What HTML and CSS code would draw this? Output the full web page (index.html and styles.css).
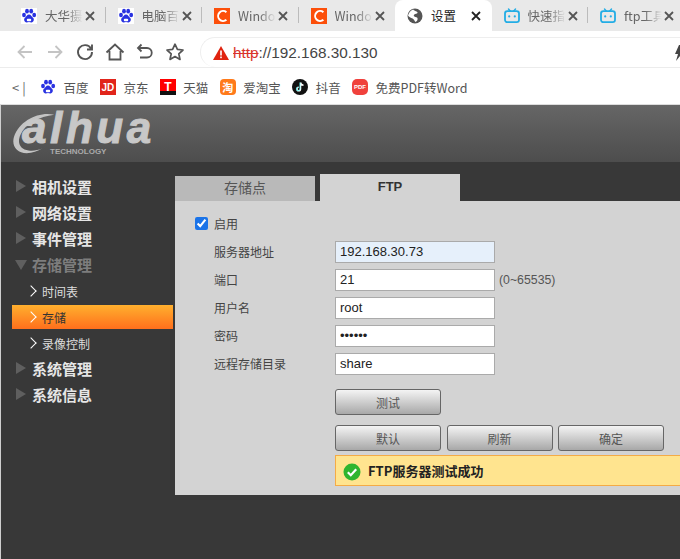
FILE: index.html
```html
<!DOCTYPE html>
<html lang="zh-CN">
<head>
    <meta charset="UTF-8">
    <title>设置</title>
    <link rel="stylesheet" href="styles.css">
</head>
<body>
    <svg class="defs" width="0" height="0">
        <symbol id="paw" viewBox="0 0 16 16">
            <rect width="16" height="16" fill="#fff"/>
            <ellipse cx="3" cy="7" rx="1.9" ry="2.3" fill="#2932e1"/>
            <ellipse cx="6" cy="3.2" rx="1.9" ry="2.4" fill="#2932e1"/>
            <ellipse cx="10.2" cy="3.2" rx="1.9" ry="2.4" fill="#2932e1"/>
            <ellipse cx="13.2" cy="7" rx="1.9" ry="2.3" fill="#2932e1"/>
            <path d="M8 6.6c2 0 2.6 2 4 3.2 1.6 1.4.8 4.6-1.6 4.6-1 0-1.600-.4-2.400-.4s-1.400.4-2.400.4C3.200 14.400 2.400 11.200 4 9.800 5.400 8.600 6 6.600 8 6.600z" fill="#2932e1"/>
            <rect x="5.800" y="10.800" width="4.400" height="2.400" rx="1" fill="#fff"/>
        </symbol>
        <symbol id="csdn" viewBox="0 0 16 16">
            <rect width="16" height="16" fill="#fc4f0a"/>
            <path d="M12.400 4.200A5 5 0 1 0 12.400 11.800" fill="none" stroke="#fff" stroke-width="2"/>
        </symbol>
        <symbol id="bili" viewBox="0 0 16 16">
            <path d="M4.500 1l2 2.200M11.500 1l-2 2.200" stroke="#23ade5" stroke-width="1.400" stroke-linecap="round"/>
            <rect x="1" y="3.200" width="14" height="11" rx="2.400" fill="none" stroke="#23ade5" stroke-width="1.800"/>
            <circle cx="5.200" cy="8.400" r="1.100" fill="#23ade5"/>
            <circle cx="10.800" cy="8.400" r="1.100" fill="#23ade5"/>
        </symbol>
        <symbol id="close" viewBox="0 0 10 10">
            <path d="M1 1l8 8M9 1l-8 8" stroke="currentColor" stroke-width="1.800"/>
        </symbol>
    </svg>

    <div class="tabstrip">
        <div class="tab sep"><svg class="favicon"><use href="#paw"/></svg><span class="tab-title">大华摄</span><svg class="tab-close"><use href="#close"/></svg></div>
        <div class="tab sep"><svg class="favicon"><use href="#paw"/></svg><span class="tab-title">电脑百</span><svg class="tab-close"><use href="#close"/></svg></div>
        <div class="tab sep"><svg class="favicon"><use href="#csdn"/></svg><span class="tab-title">Windo</span><svg class="tab-close"><use href="#close"/></svg></div>
        <div class="tab"><svg class="favicon"><use href="#csdn"/></svg><span class="tab-title">Windo</span><svg class="tab-close"><use href="#close"/></svg></div>
        <div class="tab active">
            <svg class="favicon" viewBox="0 0 16 16">
                <circle cx="8" cy="8" r="7.500" fill="#555"/>
                <path d="M6 1.500C7 3 9.500 2.800 10.500 4.200 11 5.400 9.200 5.800 8.200 6 6.800 6.400 6.200 7.800 7.400 8.600 8.600 9.400 10.200 9 10.600 10.400 10.800 12 9.600 13.400 8.400 14 7.400 12.600 7 11.200 5.600 10.400 3.800 9.600 1.800 9 1 7.400 2 4.500 3.500 2.600 6 1.500z" fill="#fff"/>
            </svg>
            <span class="tab-title">设置</span><svg class="tab-close"><use href="#close"/></svg>
        </div>
        <div class="tab sep"><svg class="favicon"><use href="#bili"/></svg><span class="tab-title">快速指</span><svg class="tab-close"><use href="#close"/></svg></div>
        <div class="tab"><svg class="favicon"><use href="#bili"/></svg><span class="tab-title">ftp工具</span><svg class="tab-close"><use href="#close"/></svg></div>
    </div>

    <div class="toolbar">
        <svg class="tool" viewBox="0 0 20 20"><path d="M17 10H3.500M9.500 4l-6 6 6 6" fill="none" stroke="#c4c4c4" stroke-width="1.800"/></svg>
        <svg class="tool" viewBox="0 0 20 20"><path d="M3 10h13.500M10.500 4l6 6-6 6" fill="none" stroke="#c4c4c4" stroke-width="1.800"/></svg>
        <svg class="tool" viewBox="0 0 20 20"><path d="M16 6.500A7 7 0 1 0 17 10M17 2.500v5h-5" fill="none" stroke="#555" stroke-width="1.900"/></svg>
        <svg class="tool" viewBox="0 0 20 20"><path d="M1.500 10.500L10 2.500l8.500 8M4.500 9v8.500h11V9" fill="none" stroke="#555" stroke-width="1.800"/></svg>
        <svg class="tool" viewBox="0 0 20 20"><path d="M6.500 2.500L3 6l3.500 3.500M3.500 6h8.500a4.500 4.500 0 0 1 0 9.500H5" fill="none" stroke="#555" stroke-width="1.800"/></svg>
        <svg class="tool" viewBox="0 0 20 20"><path d="M10 2.200l2.400 5.200 5.600.6-4.200 3.800 1.200 5.600-5-2.900-5 2.900 1.200-5.600L2 8l5.600-.6z" fill="none" stroke="#555" stroke-width="1.700" stroke-linejoin="round"/></svg>
        <div class="omnibox">
            <svg class="warn" viewBox="0 0 16 14"><path d="M8 0l8 14H0z" fill="#e0230f"/><rect x="7.200" y="4.500" width="1.600" height="5" fill="#fff"/><rect x="7.200" y="10.500" width="1.600" height="1.700" fill="#fff"/></svg>
            <span class="scheme">http</span><span class="url">://192.168.30.130</span>
            <svg class="bolt" viewBox="0 0 10 16"><path d="M5 0h5L7 6h3L2 16l2-7H1z" fill="#444"/></svg>
        </div>
    </div>

    <div class="bookmarks">
        <span class="collapse">&lt;|</span>
        <div class="bookmark"><svg class="bm-icon"><use href="#paw"/></svg>百度</div>
        <div class="bookmark"><span class="bm-icon bm-jd">JD</span>京东</div>
        <div class="bookmark"><span class="bm-icon bm-tmall">T</span>天猫</div>
        <div class="bookmark"><span class="bm-icon bm-taobao">淘</span>爱淘宝</div>
        <div class="bookmark">
            <svg class="bm-icon" viewBox="0 0 16 16"><circle cx="8" cy="8" r="8" fill="#111"/><path d="M8.500 3.500v6.500a1.800 1.800 0 1 1-1.800-1.800M8.500 3.500c.3 1.700 1.300 2.600 3 2.800" fill="none" stroke="#fff" stroke-width="1.500"/><path d="M7.900 3.500v6.500a1.800 1.800 0 1 1-1.800-1.800" fill="none" stroke="#25f4ee" stroke-width=".6"/></svg>抖音
        </div>
        <div class="bookmark"><span class="bm-icon bm-pdf">PDF</span>免费PDF转Word</div>
    </div>

    <div class="page">
        <div class="page-header">
            <div class="logo">
                <svg class="logo-swoosh" viewBox="0 0 50 46"><path d="M46 2C30-2 8 8 2 26c-3 10 3 18 14 18 6 0 12-2 17-5-5 2-11 3-15 2C9 40 5 33 9 24 14 12 30 4 46 2z" fill="#c4c4c4"/></svg>
                <span class="logo-name">alhua</span>
                <span class="logo-sub">TECHNOLOGY</span>
            </div>
        </div>
        <div class="page-body">
            <ul class="sidemenu">
                <li class="menu-item"><i class="arrow"></i>相机设置</li>
                <li class="menu-item"><i class="arrow"></i>网络设置</li>
                <li class="menu-item"><i class="arrow"></i>事件管理</li>
                <li class="menu-item open"><i class="arrow-down"></i>存储管理</li>
                <li class="sub-item"><i class="chevron"></i>时间表</li>
                <li class="sub-item current"><i class="chevron"></i>存储</li>
                <li class="sub-item"><i class="chevron"></i>录像控制</li>
                <li class="menu-item"><i class="arrow"></i>系统管理</li>
                <li class="menu-item"><i class="arrow"></i>系统信息</li>
            </ul>
            <div class="content">
                <div class="tabs">
                    <div class="content-tab">存储点</div>
                    <div class="content-tab selected">FTP</div>
                </div>
                <div class="panel">
                    <label class="enable"><input type="checkbox" checked>启用</label>
                    <div class="form-row"><span class="form-label">服务器地址</span><input class="field focused" value="192.168.30.73"></div>
                    <div class="form-row"><span class="form-label">端口</span><input class="field" value="21"><span class="hint">(0~65535)</span></div>
                    <div class="form-row"><span class="form-label">用户名</span><input class="field" value="root"></div>
                    <div class="form-row"><span class="form-label">密码</span><input class="field pass" type="password" value="123456"></div>
                    <div class="form-row"><span class="form-label">远程存储目录</span><input class="field" value="share"></div>
                    <div class="test-row"><button class="btn">测试</button></div>
                    <div class="btn-row">
                        <button class="btn">默认</button>
                        <button class="btn">刷新</button>
                        <button class="btn">确定</button>
                    </div>
                    <div class="message">
                        <svg class="ok" viewBox="0 0 18 18"><circle cx="9" cy="9" r="8.500" fill="#2fb52f"/><path d="M4.800 9.200l3 3 5.400-6" fill="none" stroke="#fff" stroke-width="2.200"/></svg>
                        FTP服务器测试成功
                    </div>
                </div>
            </div>
        </div>
    </div>
</body>
</html>
```

FILE: styles.css
```css
* {
    box-sizing: border-box;
}

body {
    margin: 0;
    width: 680px;
    height: 559px;
    overflow: hidden;
    font-family: "Noto Sans CJK SC", "Liberation Sans", sans-serif;
    background: #383838;
}

.defs {
    position: absolute;
}

/* browser chrome */
.tabstrip {
    display: flex;
    height: 31px;
    padding-left: 9px;
    background: #e9e9e9;
    white-space: nowrap;
}

.tab {
    position: relative;
    flex: 0 0 96.5px;
    display: flex;
    align-items: center;
    padding-left: 12px;
    color: #666;
    font-size: 12.5px;
}

.tab.sep::after {
    content: "";
    position: absolute;
    right: 0;
    top: 7px;
    height: 16px;
    border-right: 1px solid #bbb;
}

.tab.active {
    background: #fff;
    border-radius: 8px 8px 0 0;
    color: #222;
}

.favicon {
    flex: none;
    width: 16px;
    height: 16px;
}

.tab-title {
    width: 38px;
    margin-left: 8px;
    -webkit-mask-image: linear-gradient(to right, #000 55%, transparent);
    mask-image: linear-gradient(to right, #000 55%, transparent);
}

.tab.active .tab-title {
    -webkit-mask-image: none;
    mask-image: none;
}

.tab-close {
    flex: none;
    width: 10px;
    height: 10px;
    margin-left: 2px;
    color: #555;
}

.tab.active .tab-close {
    color: #222;
}

.toolbar {
    display: flex;
    align-items: center;
    height: 37px;
    padding: 6px 0 0 15px;
    background: #fff;
    border-bottom: 1px solid #ececec;
}

.tool {
    flex: none;
    width: 20px;
    height: 20px;
    margin-right: 10px;
}

.omnibox {
    flex: 1;
    display: flex;
    align-items: center;
    height: 30px;
    margin-left: 5px;
    padding-left: 12px;
    border: 1px solid #eee;
    border-right: 0;
    border-bottom: 0;
    border-radius: 16px 0 0 16px;
    font-family: "Liberation Sans", sans-serif;
    font-size: 15.3px;
    position: relative;
}

.warn {
    width: 16px;
    height: 14px;
    margin-right: 4px;
}

.scheme {
    color: #d9342b;
    text-decoration: line-through;
}

.url {
    color: #444;
}

.bolt {
    position: absolute;
    right: -4px;
    top: 7px;
    width: 10px;
    height: 16px;
}

.bookmarks {
    display: flex;
    align-items: center;
    height: 36px;
    padding: 2px 0 0 12px;
    background: #fff;
    color: #555;
    font-size: 12.5px;
}

.collapse {
    width: 28px;
    color: #666;
    font-size: 13px;
    letter-spacing: 3px;
}

.bookmark {
    display: flex;
    align-items: center;
    gap: 7.5px;
    margin-right: 11.4px;
    white-space: nowrap;
}

.bm-icon {
    display: flex;
    flex: none;
    align-items: center;
    justify-content: center;
    width: 16px;
    height: 16px;
    color: #fff;
    font-family: "Liberation Sans", sans-serif;
    font-weight: bold;
    font-size: 10px;
}

.bm-jd {
    background: #e1251b;
}

.bm-tmall {
    background: linear-gradient(#f00 75%, #111 75%);
    font-size: 12px;
}

.bm-taobao {
    background: #ff7a1a;
    border-radius: 4px;
    font-family: "Noto Sans CJK SC", sans-serif;
    font-size: 11px;
}

.bm-pdf {
    background: #f0413c;
    border-radius: 5px;
    font-size: 6px;
}

/* camera page */
.page {
    border-top: 1px solid #ddd;
    border-left: 1px solid #cfcfcf;
}

.page-header {
    height: 57px;
    background: linear-gradient(#666, #4d4d4d);
    padding: 6px 0 0 11px;
}

.logo {
    position: relative;
    width: 145px;
    height: 46px;
}

.logo-swoosh {
    position: absolute;
    left: 0;
    top: 2px;
    width: 46px;
    height: 42px;
}

.logo-name {
    position: absolute;
    left: 10px;
    top: 1px;
    color: #c8c8c8;
    font-family: "Liberation Sans", sans-serif;
    font-style: italic;
    font-weight: bold;
    font-size: 44px;
    line-height: 32px;
    letter-spacing: 3.6px;
    -webkit-text-stroke: 1px #c8c8c8;
}

.logo-sub {
    position: absolute;
    left: 38px;
    top: 36px;
    color: #aaa;
    font-family: "Liberation Sans", sans-serif;
    font-weight: bold;
    font-size: 8px;
    line-height: 9px;
}

.page-body {
    display: flex;
    height: 397px;
}

.sidemenu {
    flex: 0 0 174px;
    margin: 0;
    padding: 12px 2px 0 11px;
    list-style: none;
}

.menu-item,
.sub-item {
    display: flex;
    align-items: center;
    height: 26px;
    white-space: nowrap;
}

.menu-item {
    padding: 0 0 2px 4px;
    color: #e6e6e6;
    font-size: 15px;
    font-weight: bold;
}

.menu-item.open {
    color: #7d7d7d;
}

.arrow {
    width: 0;
    height: 0;
    margin-right: 6px;
    border-left: 10px solid #5f5f5f;
    border-top: 6px solid transparent;
    border-bottom: 6px solid transparent;
}

.arrow-down {
    width: 0;
    height: 0;
    margin: 2px 5px 0 -1px;
    border-top: 10px solid #5f5f5f;
    border-left: 6px solid transparent;
    border-right: 6px solid transparent;
}

.sub-item {
    padding-left: 15px;
    color: #ddd;
    font-size: 12px;
}

.sub-item.current {
    height: 24px;
    margin: 1px 0;
    background: linear-gradient(#ffb02e, #ff6f1c);
    color: #333;
}

.chevron {
    width: 8px;
    height: 8px;
    margin-right: 7px;
    border-top: 1.5px solid #fff;
    border-right: 1.5px solid #fff;
    transform: rotate(45deg);
}

.content {
    flex: 1;
    padding-top: 12px;
}

.tabs {
    display: flex;
    align-items: flex-end;
    gap: 5px;
    height: 27px;
}

.content-tab {
    width: 140px;
    height: 25px;
    background: #b9b9b9;
    color: #555;
    font-size: 14px;
    line-height: 23px;
    text-align: center;
}

.content-tab.selected {
    height: 27px;
    background: #d3d3d3;
    color: #333;
    font-family: "Liberation Sans", sans-serif;
    font-size: 13px;
    font-weight: bold;
    line-height: 26px;
}

.panel {
    height: 294px;
    padding: 14px 0 0 20px;
    background: #d3d3d3;
    color: #444;
    font-size: 12px;
}

.enable {
    display: flex;
    align-items: center;
    height: 16px;
}

.enable input {
    width: 13px;
    height: 13px;
    margin: 0 6px 0 0;
    accent-color: #1a73e8;
}

.form-row {
    display: flex;
    align-items: center;
    height: 28px;
    padding-left: 19px;
}

.enable + .form-row {
    margin-top: 7px;
}

.form-label {
    width: 121px;
    padding-bottom: 2px;
}

.field {
    width: 160px;
    height: 22px;
    padding: 0 4px 2px;
    background: #fff;
    border: 1px solid #aaa;
    color: #222;
    font-family: "Liberation Sans", sans-serif;
    font-size: 13px;
    outline: 0;
}

.field.focused {
    background: #e6f0fb;
}

.hint {
    margin-left: 4px;
    color: #555;
    font-family: "Liberation Sans", sans-serif;
    font-size: 12.3px;
}

.test-row,
.btn-row {
    display: flex;
    gap: 5.5px;
    padding-left: 140px;
}

.test-row {
    margin-top: 11px;
}

.btn-row {
    margin-top: 10px;
}

.btn {
    width: 106px;
    height: 26px;
    padding: 0;
    background: linear-gradient(#f4f4f4, #a8a8a8);
    border: 1px solid #666;
    border-radius: 3px;
    color: #555;
    font-family: "Noto Sans CJK SC", sans-serif;
    font-size: 12px;
}

.message {
    display: flex;
    align-items: center;
    gap: 7px;
    height: 31px;
    margin: 4px 0 0 140px;
    padding-left: 7px;
    background: #ffe48f;
    border: 1px solid #f4ab46;
    border-right: 0;
    color: #222;
    font-size: 13px;
    font-weight: bold;
}

.ok {
    width: 18px;
    height: 18px;
    margin-top: 3px;
}
```
